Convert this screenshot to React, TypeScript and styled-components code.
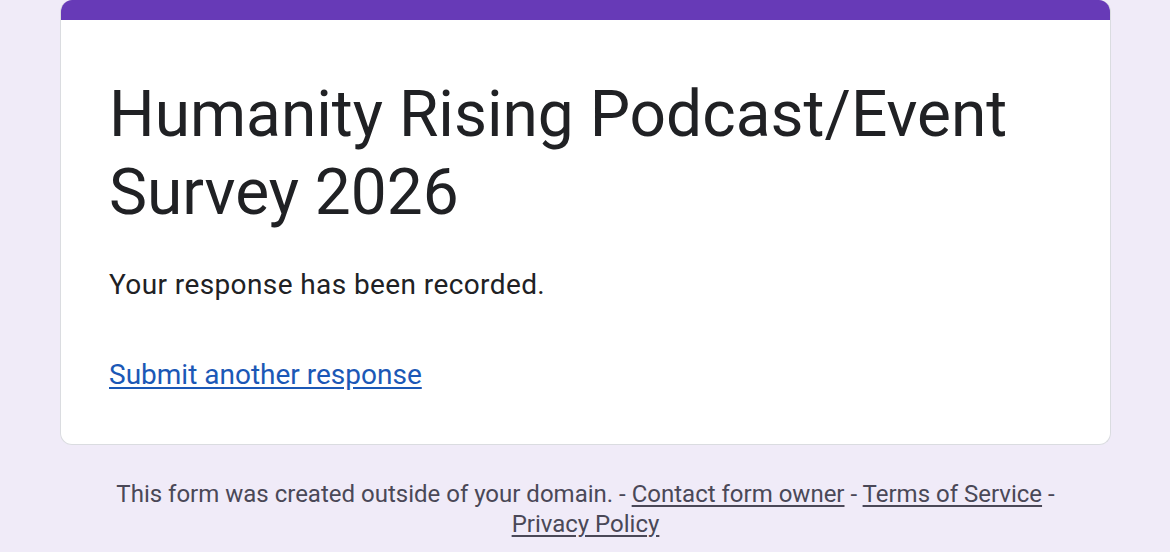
import React from "react";
import styled, { createGlobalStyle } from "styled-components";

const GlobalStyle = createGlobalStyle`
  html, body {
    margin: 0;
    padding: 0;
    background-color: #f0ebf8;
    font-family: Roboto, "Noto Sans", Arial, sans-serif;
  }
`;

const Page = styled.div`
  display: flex;
  flex-direction: column;
  align-items: center;
  padding: 0 59px 0 60px;
`;

const Card = styled.div`
  width: 100%;
  box-sizing: border-box;
  background-color: #fff;
  border: 1px solid #dadce0;
  border-top: none;
  border-radius: 12px;
  overflow: hidden;
`;

const AccentBar = styled.div`
  height: 20px;
  background-color: #673ab7;
`;

const CardBody = styled.div`
  padding: 56px 48px 51px 48px;
`;

const Title = styled.h1`
  margin: 0;
  font-size: 64px;
  line-height: 78px;
  font-weight: 400;
  color: #202124;
`;

const Message = styled.p`
  margin: 35px 0 0 0;
  font-size: 28px;
  line-height: 36px;
  letter-spacing: 0.4px;
  color: #202124;
`;

const ActionLink = styled.a`
  display: inline-block;
  margin-top: 54px;
  font-size: 28px;
  line-height: 36px;
  letter-spacing: 0;
  color: #1b58b6;
  text-decoration: underline;
  text-underline-offset: 3px;
`;

const Footer = styled.div`
  margin-top: 34px;
  max-width: 960px;
  text-align: center;
  font-size: 24px;
  line-height: 30px;
  color: #4a4857;
`;

const FooterLink = styled.a`
  color: inherit;
  text-decoration: underline;
  text-underline-offset: 3px;
`;

export default function App() {
  return (
    <>
      <GlobalStyle />
      <Page>
        <Card>
          <AccentBar />
          <CardBody>
            <Title>Humanity Rising Podcast/Event Survey 2026</Title>
            <Message>Your response has been recorded.</Message>
            <ActionLink href="#">Submit another response</ActionLink>
          </CardBody>
        </Card>
        <Footer>
          This form was created outside of your domain. -{" "}
          <FooterLink href="#">Contact form owner</FooterLink> -{" "}
          <FooterLink href="#">Terms of Service</FooterLink> -{" "}
          <FooterLink href="#">Privacy Policy</FooterLink>
        </Footer>
      </Page>
    </>
  );
}
